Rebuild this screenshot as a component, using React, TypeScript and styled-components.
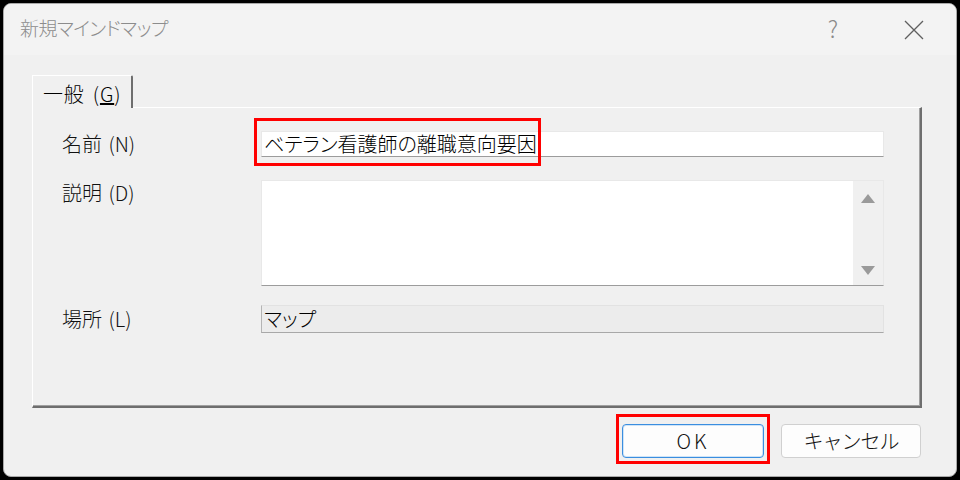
import styled, { createGlobalStyle, css } from "styled-components";

const GlobalStyle = createGlobalStyle`
  html, body {
    margin: 0;
    padding: 0;
    background: #000;
  }
  body {
    font-family: "Noto Sans CJK JP", "Noto Sans", sans-serif;
    font-feature-settings: "palt";
    font-weight: 300;
  }
`;

function CloseIcon() {
  return (
    <svg width="20" height="20" viewBox="0 0 20 20">
      <path d="M1 1 L19 19 M19 1 L1 19" stroke="#5f5f5f" strokeWidth="1.3" fill="none" />
    </svg>
  );
}

function Arrow({ down }: { down?: boolean }) {
  return (
    <svg width="14" height="9" viewBox="0 0 14 9">
      <path d={down ? "M0 0 L14 0 L7 9 Z" : "M7 0 L14 9 L0 9 Z"} fill="#9a9a9a" />
    </svg>
  );
}

function App() {
  return (
    <>
      <GlobalStyle />
      <Frame>
        <Window>
          <TitleBar>
            <Title>新規マインドマップ</Title>
            <TitleButtons>
              <Help>?</Help>
              <CloseButton>
                <CloseIcon />
              </CloseButton>
            </TitleButtons>
          </TitleBar>
          <Body>
            <TabStrip>
              <Tab>
                一般 (<u>G</u>)
              </Tab>
            </TabStrip>
            <Panel>
              <FieldRow $height={26} $after={23}>
                <Label>名前 (N)</Label>
                <TextBox>
                  <Marked>
                    ベテラン看護師の離職意向要因
                    <RedBox $inset="-11px -4px -8px -10px" />
                  </Marked>
                </TextBox>
              </FieldRow>
              <FieldRow $height={106} $after={19} $top>
                <Label>説明 (D)</Label>
                <TextBox>
                  <Scroll>
                    <Arrow />
                    <Arrow down />
                  </Scroll>
                </TextBox>
              </FieldRow>
              <FieldRow $height={28} $after={0}>
                <Label>場所 (L)</Label>
                <TextBox $readOnly>マップ</TextBox>
              </FieldRow>
            </Panel>
            <ButtonRow>
              <Marked>
                <Button $primary>OK</Button>
                <RedBox $inset="-10px -6px -6px -6px" />
              </Marked>
              <Button>キャンセル</Button>
            </ButtonRow>
          </Body>
        </Window>
      </Frame>
    </>
  );
}

const Frame = styled.div`
  width: 960px;
  height: 480px;
  padding: 3px;
  box-sizing: border-box;
  background: #000;
`;

const Window = styled.div`
  height: 100%;
  box-sizing: border-box;
  border: 1px solid #a9a9a9;
  border-radius: 8px;
  background: #f0f0f0;
  display: flex;
  flex-direction: column;
  overflow: hidden;
`;

const TitleBar = styled.div`
  height: 51px;
  flex: none;
  display: flex;
  align-items: center;
  justify-content: space-between;
  padding: 0 32px 0 16px;
  background: #f3f3f3;
`;

const Title = styled.div`
  font-size: 19px;
  letter-spacing: -0.6px;
  color: #8c8c8c;
  padding-bottom: 4px;
`;

const TitleButtons = styled.div`
  display: flex;
  align-items: center;
  gap: 66px;
`;

const Help = styled.span`
  font-size: 23px;
  color: #8a8a8a;
  font-weight: 300;
  padding-bottom: 3px;
`;

const CloseButton = styled.span`
  display: flex;
`;

const Body = styled.div`
  flex: 1;
  display: flex;
  flex-direction: column;
  padding: 20px 34px 0 28px;
`;

const TabStrip = styled.div`
  display: flex;
  height: 32px;
`;

const Tab = styled.div`
  width: 101px;
  box-sizing: border-box;
  height: 33px;
  padding: 3px 0 0 10px;
  font-size: 20px;
  word-spacing: 3px;
  letter-spacing: 0.8px;
  color: #000;
  background: #f0f0f0;
  border-top: 1px solid #fff;
  border-left: 1px solid #fff;
  border-right: 2px solid #6e6e6e;
  border-top-right-radius: 2px;
  position: relative;
  z-index: 1;
`;

const Panel = styled.div`
  height: 301px;
  box-sizing: border-box;
  border-top: 1px solid #fff;
  border-left: 1px solid #fff;
  border-right: 2px solid #6e6e6e;
  border-bottom: 2px solid #6e6e6e;
  box-shadow: inset -1px -1px 0 #a0a0a0;
  padding: 23px 36px 0 29px;
  display: flex;
  flex-direction: column;
`;

const FieldRow = styled.div<{ $height: number; $after: number; $top?: boolean }>`
  display: flex;
  height: ${(p) => p.$height}px;
  margin-bottom: ${(p) => p.$after}px;
  align-items: ${(p) => (p.$top ? "flex-start" : "center")};
`;

const Label = styled.div`
  width: 199px;
  flex: none;
  font-size: 20px;
  line-height: 26px;
  color: #111;
  word-spacing: 2px;
`;

const TextBox = styled.div<{ $readOnly?: boolean }>`
  flex: 1;
  align-self: stretch;
  position: relative;
  box-sizing: border-box;
  display: flex;
  align-items: center;
  padding: 0 2px 1px;
  font-size: 20px;
  color: #000;
  background: #fff;
  border: 1px solid #e8e8e8;
  border-bottom-color: #9c9c9c;
  ${(p) =>
    p.$readOnly &&
    css`
      background: #ececec;
      border-color: #e2e2e2;
      border-left-color: #b4b4b4;
      border-bottom-color: #a8a8a8;
    `}
`;

const Scroll = styled.div`
  position: absolute;
  top: 0;
  right: 0;
  bottom: 0;
  width: 30px;
  background: #f0f0f0;
  display: flex;
  flex-direction: column;
  align-items: center;
  justify-content: space-between;
  padding: 13px 0 10px;
  box-sizing: border-box;
`;

const Marked = styled.span`
  position: relative;
  display: inline-flex;
  align-items: center;
`;

const RedBox = styled.span<{ $inset: string }>`
  position: absolute;
  inset: ${(p) => p.$inset};
  border: 3px solid #f00;
  pointer-events: none;
`;

const ButtonRow = styled.div`
  display: flex;
  justify-content: flex-end;
  gap: 17px;
  margin-top: 16px;
  padding-right: 1px;
`;

const Button = styled.button<{ $primary?: boolean }>`
  height: 34px;
  width: ${(p) => (p.$primary ? 142 : 140)}px;
  box-sizing: border-box;
  font-family: inherit;
  font-weight: 300;
  font-size: 20px;
  letter-spacing: -1px;
  color: #111;
  background: #fdfdfd;
  border: 1px solid #d0d0d0;
  border-radius: 4px;
  padding: 0 0 2px;
  ${(p) =>
    p.$primary &&
    css`
      border-color: #3a8ee0;
      box-shadow: inset 0 0 0 1px #cfe4f7;
      letter-spacing: 3px;
    `}
`;

export default App;
